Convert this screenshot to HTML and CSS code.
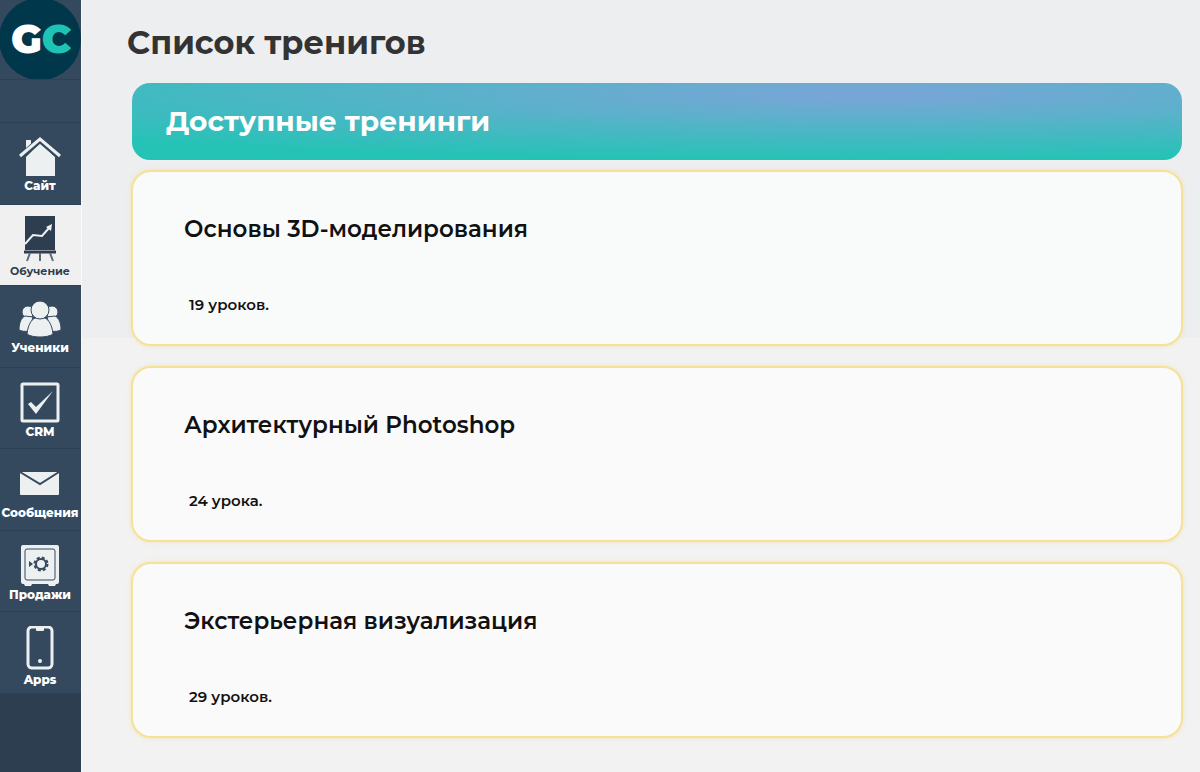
FILE: index.html
```html
<!DOCTYPE html>
<html lang="ru">
<head>
  <meta charset="utf-8">
  <meta name="viewport" content="width=device-width, initial-scale=1">
  <title>Список тренигов</title>
  <link rel="stylesheet" href="styles.css">
</head>
<body>
  <div class="page">
    <nav class="sidebar">
      <a class="logo" href="#">
        <svg width="81" height="80" viewBox="0 0 81 80">
          <circle cx="40" cy="39" r="41" fill="#01374b"/>
          <text x="11" y="53" fill="#fff">G<tspan fill="#1fc3b5">C</tspan></text>
        </svg>
      </a>
      <div class="spacer"></div>

      <div class="menu">
        <a class="item" href="#">
          <svg width="44" height="40" viewBox="0 0 44 40">
            <path d="M8 3h5v4l-5 5zM22 6L37 20V39H8V20z" fill="#ecf0f1"/>
            <path d="M2 20L22 3l20 17" fill="none" stroke="#34495e" stroke-width="6"/>
            <path d="M2 19L22 2l20 17" fill="none" stroke="#ecf0f1" stroke-width="3"/>
          </svg>
          <span>Сайт</span>
        </a>

        <a class="item active" href="#">
          <svg width="44" height="46" viewBox="0 0 44 46">
            <path d="M7 0h30v34H7z" fill="#2c3e50"/>
            <path d="M7 28l8-9 9 1 7-8" fill="none" stroke="#f0f0f0" stroke-width="2"/>
            <path d="M34 8l-1 7-5-4z" fill="#f0f0f0"/>
            <path d="M6 36h32" fill="none" stroke="#2c3e50" stroke-width="3"/>
            <path d="M12 37l-3 8M22 37v8M32 37l3 8" fill="none" stroke="#5d6b78" stroke-width="2"/>
          </svg>
          <span>Обучение</span>
        </a>

        <a class="item" href="#">
          <svg width="44" height="39" viewBox="0 0 44 39">
            <g fill="#ecf0f1" stroke="#34495e" stroke-width="1">
              <circle cx="10" cy="12" r="6"/>
              <circle cx="34" cy="12" r="6"/>
              <path d="M1 30c0-7 2-12 6-14l8 1-4 14c-4 1-8 0-10-1z"/>
              <path d="M43 30c0-7-2-12-6-14l-8 1 4 14c4 1 8 0 10-1z"/>
              <path d="M9 34c1-9 4-14 8-16h10c4 2 7 7 8 16-5 4-21 4-26 0z"/>
              <circle cx="22" cy="10" r="9"/>
            </g>
          </svg>
          <span>Ученики</span>
        </a>

        <a class="item" href="#">
          <svg width="44" height="41" viewBox="0 0 44 41">
            <rect x="4" y="2" width="36" height="37" rx="1" fill="none" stroke="#ecf0f1" stroke-width="3"/>
            <path d="M10 22l3-2 5 5 17-16-17 23z" fill="#ecf0f1"/>
          </svg>
          <span>CRM</span>
        </a>

        <a class="item" href="#">
          <svg width="44" height="41" viewBox="0 0 44 41">
            <rect x="2" y="9" width="39" height="23" rx="1" fill="#ecf0f1"/>
            <path d="M2 9l20 12L41 9" fill="none" stroke="#34495e" stroke-width="2"/>
          </svg>
          <span>Сообщения</span>
        </a>

        <a class="item" href="#">
          <svg width="44" height="41" viewBox="0 0 44 41">
            <path d="M5 0h34q2 0 2 2v35q0 2-2 2h-1l-1 2h-6l-1-2H14l-1 2H7l-1-2H5q-2 0-2-2V2q0-2 2-2z" fill="#ecf0f1"/>
            <rect x="7" y="4" width="30" height="31" rx="2" fill="none" stroke="#34495e"/>
            <circle cx="23" cy="19" r="5" fill="none" stroke="#34495e" stroke-width="2"/>
            <circle cx="23" cy="19" r="6.5" fill="none" stroke="#34495e" stroke-width="2" stroke-dasharray="3 2.1"/>
            <path d="M11 16l4 3-4 3z" fill="#34495e"/>
          </svg>
          <span>Продажи</span>
        </a>

        <a class="item" href="#">
          <svg width="44" height="45" viewBox="0 0 44 45">
            <rect x="10" y="1" width="24" height="41" rx="4" fill="none" stroke="#ecf0f1" stroke-width="3"/>
            <path d="M18 1h8v3q0 1-1 1h-6q-1 0-1-1z" fill="#ecf0f1"/>
            <circle cx="22" cy="35" r="2" fill="#ecf0f1"/>
          </svg>
          <span>Apps</span>
        </a>
      </div>
    </nav>

    <main class="content">
      <h1>Список тренигов</h1>
      <h2 class="banner">Доступные тренинги</h2>

      <a class="card first" href="#">
        <h3>Основы 3D-моделирования</h3>
        <p>19 уроков.</p>
      </a>
      <a class="card" href="#">
        <h3>Архитектурный Photoshop</h3>
        <p>24 урока.</p>
      </a>
      <a class="card" href="#">
        <h3>Экстерьерная визуализация</h3>
        <p>29 уроков.</p>
      </a>
    </main>
  </div>
</body>
</html>
```
FILE: styles.css
```css
* {
  box-sizing: border-box;
}
body {
  margin: 0;
  font-family: Montserrat, Inter, sans-serif;
  color: #111;
}
a {
  color: inherit;
  text-decoration: none;
}
.page {
  display: flex;
  min-height: 100vh;
}

/* sidebar */
.sidebar {
  width: 81px;
  flex-shrink: 0;
  background-color: #2c3e50;
}
.logo {
  display: block;
  height: 80px;
  background-color: #34495e;
  border-bottom: 1px solid #2c4157;
  overflow: hidden;
}
.logo svg {
  display: block;
}
.logo text {
  font-size: 40px;
  font-weight: 900;
}
.spacer {
  height: 43px;
  background-color: #34495e;
  border-bottom: 1px solid #2c4157;
}
.menu {
  display: grid;
  grid-auto-rows: 1fr;
  height: 571px;
}
.item {
  display: flex;
  flex-direction: column;
  align-items: center;
  padding: 14px 1px 0 0;
  background-color: #34495e;
  border-bottom: 1px solid #2c4157;
  color: #fff;
  font-size: 12px;
  font-weight: 800;
  line-height: 18px;
}
.item svg {
  flex-shrink: 0;
}
.item.active {
  padding-top: 11px;
  background-color: #f0f0f0;
  color: #2c3e50;
  font-size: 11px;
  font-weight: 700;
}

/* content */
.content {
  flex: 1;
  min-width: 0;
  padding: 25px 17px 24px 49px;
  border-left: 1px solid #f8f8f8;
  background: linear-gradient(#edeef0, #edeef0) top / 100% 338px no-repeat #f2f2f2;
}
h1, h2, h3, p {
  margin: 0;
}
h1 {
  margin-left: -4px;
  color: #333;
  font-size: 32px;
  font-weight: 700;
  line-height: 36px;
}
.banner {
  margin: 22px 1px 10px;
  padding: 20px 34px 21px;
  border-radius: 18px;
  background: radial-gradient(ellipse 100% 85% at 70% 15%, #7ba4d8 0%, #5eb0cc 35%, #25c3b6 100%);
  color: #fff;
  font-size: 28px;
  font-weight: 700;
  line-height: 36px;
}
.card {
  display: block;
  height: 176px;
  margin-bottom: 20px;
  padding: 42px 51px;
  border: 2px solid #f6e199;
  border-radius: 20px;
  background-color: #fafafa;
  box-shadow: 0 0 4px rgba(246, 220, 130, 0.5);
}
.card.first {
  background-color: #f9fbfa;
}
.card h3 {
  font-size: 23px;
  font-weight: 600;
  line-height: 30px;
}
.card p {
  margin: 49px 0 0 5px;
  font-size: 15px;
  font-weight: 600;
  line-height: 24px;
}
```
